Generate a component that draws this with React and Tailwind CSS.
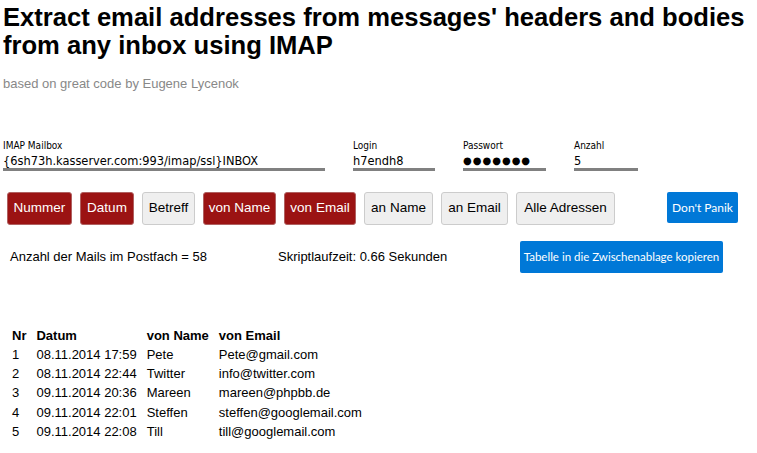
import React from 'react';

const rows = [
  ['1', '08.11.2014 17:59', 'Pete', 'Pete@gmail.com'],
  ['2', '08.11.2014 22:44', 'Twitter', 'info@twitter.com'],
  ['3', '09.11.2014 20:36', 'Mareen', 'mareen@phpbb.de'],
  ['4', '09.11.2014 22:01', 'Steffen', 'steffen@googlemail.com'],
  ['5', '09.11.2014 22:08', 'Till', 'till@googlemail.com'],
];

const sortButtons = [
  { label: 'Nummer', on: true, w: 'w-[65px]' },
  { label: 'Datum', on: true, w: 'w-[54px]' },
  { label: 'Betreff', on: false, w: 'w-[53px]' },
  { label: 'von Name', on: true, w: 'w-[73px]' },
  { label: 'von Email', on: true, w: 'w-[72px]' },
  { label: 'an Name', on: false, w: 'w-[69px]' },
  { label: 'an Email', on: false, w: 'w-[67px]' },
  { label: 'Alle Adressen', on: false, w: 'w-[99px]' },
];

const Field = ({ label, value, width, secret }) => (
  <div className={width}>
    <label className="block text-[10px] leading-[12px] font-['DejaVu_Sans_Condensed',sans-serif] text-black">
      {label}
    </label>
    <div
      className={
        secret
          ? 'border-b-[3px] border-[#808080] h-[19px] text-[10px] leading-[18px] tracking-[1px] pb-[1px] font-["DejaVu_Sans",sans-serif] text-black whitespace-nowrap'
          : 'border-b-[3px] border-[#808080] h-[19px] text-[12.7px] leading-[17px] pb-[1px] font-["DejaVu_Sans_Condensed",sans-serif] text-black whitespace-nowrap'
      }
    >
      {value}
    </div>
  </div>
);

const App = () => {
  return (
    <div className="min-h-screen bg-white font-['Liberation_Sans',Arial,sans-serif] text-black">
      <h1 className="text-[25.6px] leading-[28px] font-bold px-[3px] pt-[3px]">
        Extract email addresses from messages' headers and bodies from any inbox using IMAP
      </h1>
      <p className="mt-[17px] px-[3px] text-[13px] leading-[15px] text-[#888888]">
        based on great code by Eugene Lycenok
      </p>

      <div className="flex items-end mt-[49px] px-[3px]">
        <Field label="IMAP Mailbox" value="{6sh73h.kasserver.com:993/imap/ssl}INBOX" width="w-[322px]" />
        <Field label="Login" value="h7endh8" width="w-[82px] ml-[28px]" />
        <Field label="Passwort" value="●●●●●●●" width="w-[83px] ml-[28px]" secret />
        <Field label="Anzahl" value="5" width="w-[64px] ml-[28px]" />
      </div>

      <div className="flex items-start mt-[21px] pl-[7px]">
        <div className="flex gap-[8px]">
          {sortButtons.map((b) => (
            <button
              key={b.label}
              className={
                b.on
                  ? `${b.w} h-[33px] whitespace-nowrap rounded-[3px] border border-[#b06060] bg-[#9b1313] text-white text-[13.5px]`
                  : `${b.w} h-[33px] whitespace-nowrap rounded-[3px] border border-[#cccccc] bg-[#efefef] text-black text-[13.5px]`
              }
            >
              {b.label}
            </button>
          ))}
        </div>
        <button className="ml-[52px] h-[31px] w-[71px] whitespace-nowrap rounded-[2px] bg-[#0078d7] text-white text-[12px] font-['Lato',sans-serif]">
          Don't Panik
        </button>
      </div>

      <div className="flex items-center mt-[16px]">
        <span className="ml-[10px] w-[268px] text-[13px]">Anzahl der Mails im Postfach = 58</span>
        <span className="w-[242px] text-[13px]">Skriptlaufzeit: 0.66 Sekunden</span>
        <button className="h-[32px] w-[203px] whitespace-nowrap rounded-[2px] bg-[#0078d7] text-white text-[11.5px] font-['Lato',sans-serif]">
          Tabelle in die Zwischenablage kopieren
        </button>
      </div>

      <table className="mt-[53px] ml-[10px] text-[13px] leading-[15px] border-separate border-spacing-x-[2px] border-spacing-y-0">
        <thead>
          <tr className="h-[19px] text-left">
            <th className="pr-[8px] py-0 font-bold">Nr</th>
            <th className="pr-[8px] py-0 font-bold">Datum</th>
            <th className="pr-[8px] py-0 font-bold">von Name</th>
            <th className="py-0 font-bold">von Email</th>
          </tr>
        </thead>
        <tbody>
          {rows.map((r) => (
            <tr key={r[0]} className="h-[19.2px]">
              <td className="pr-[8px] py-0">{r[0]}</td>
              <td className="pr-[8px] py-0">{r[1]}</td>
              <td className="pr-[8px] py-0">{r[2]}</td>
              <td className="py-0">{r[3]}</td>
            </tr>
          ))}
        </tbody>
      </table>
    </div>
  );
};

export default App;
